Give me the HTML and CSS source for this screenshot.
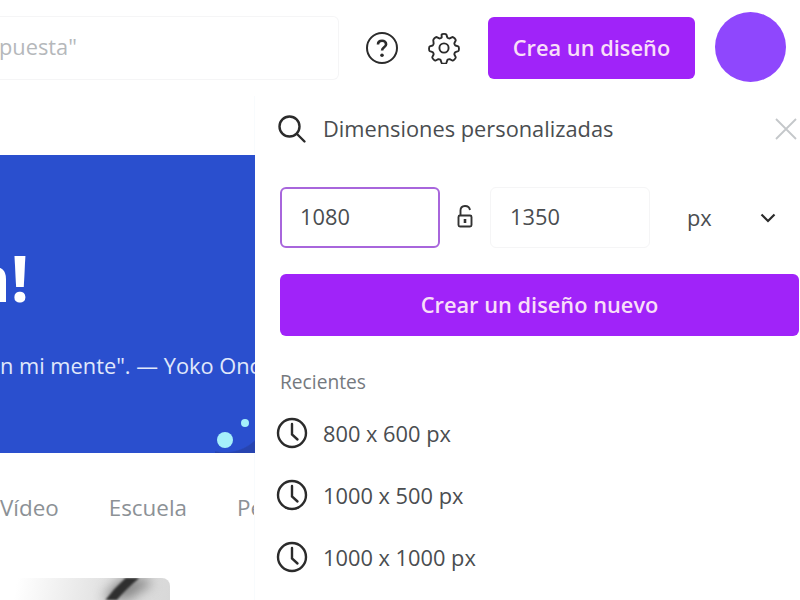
FILE: index.html
```html
<!DOCTYPE html>
<html lang="es">
<head>
    <meta charset="UTF-8">
    <title>Crea un diseño</title>
    <link rel="stylesheet" href="styles.css">
</head>
<body>
    <header class="topBar">
        <div class="searchBox">puesta"</div>
        <svg class="helpIcon" width="34" height="34" viewBox="0 0 34 34" fill="none" stroke="#2b2b2b" stroke-width="2">
            <circle cx="17" cy="17" r="15"/>
            <path d="M13 13.6c0-2.4 1.8-3.8 4.1-3.8s4 1.4 4 3.4c0 3.2-4 3-4 6.2" stroke-width="2.6"/>
            <circle cx="17" cy="24.2" r="1.8" fill="#2b2b2b" stroke="none"/>
        </svg>
        <svg class="gearIcon" width="32" height="32" viewBox="0 0 32 32" fill="none" stroke="#2b2b2b" stroke-width="1.9" stroke-linejoin="round">
            <circle cx="16" cy="16" r="4.6"/>
            <path d="M13.6 2.6c.4-1 4.4-1 4.8 0l.9 2.8c.2.5 1.9 1.2 2.4 1l2.6-1.3c1-.4 3.8 2.4 3.4 3.4l-1.3 2.6c-.2.5.5 2.2 1 2.4l2.8.9c1 .4 1 4.4 0 4.8l-2.8.9c-.5.2-1.2 1.9-1 2.4l1.3 2.6c.4 1-2.4 3.8-3.4 3.4l-2.6-1.3c-.5-.2-2.2.5-2.4 1l-.9 2.8c-.4 1-4.4 1-4.8 0l-.9-2.8c-.2-.5-1.9-1.2-2.4-1l-2.6 1.3c-1 .4-3.8-2.4-3.4-3.4l1.3-2.6c.2-.5-.5-2.2-1-2.4l-2.8-.9c-1-.4-1-4.4 0-4.8l2.8-.9c.5-.2 1.2-1.9 1-2.4L5.3 8.5c-.4-1 2.4-3.8 3.4-3.4l2.6 1.3c.5.2 2.2-.5 2.4-1z"/>
        </svg>
        <button class="createButton">Crea un diseño</button>
        <div class="avatar"></div>
    </header>

    <main class="content">
        <section class="leftColumn">
            <div class="banner">
                <div class="bannerTitle">n!</div>
                <div class="bannerQuote">n mi mente". — Yoko Ono</div>
                <span class="bannerCorner"></span>
                <span class="dot dotBig"></span>
                <span class="dot dotSmall"></span>
            </div>
            <nav class="tabs">
                <span>Vídeo</span>
                <span>Escuela</span>
                <span>Personal</span>
            </nav>
            <div class="thumb">
                <svg class="thumbGlow" width="170" height="22" viewBox="0 0 170 22">
                    <path d="M112 26C120 15 130 6 146 -3" fill="none" stroke="#8a8a8a" stroke-width="22"/>
                </svg>
                <svg class="thumbStreak" width="170" height="22" viewBox="0 0 170 22">
                    <path d="M108 26C116 15 125 6 136 -3" fill="none" stroke="#2f2f2f" stroke-width="9"/>
                </svg>
            </div>
        </section>

        <aside class="panel">
            <div class="panelSearch">
                <svg width="30" height="30" viewBox="0 0 30 30" fill="none" stroke="#2b2b2b" stroke-width="2.4">
                    <circle cx="12.5" cy="12.5" r="10"/>
                    <path d="M20 20l7.5 7.5" stroke-linecap="round"/>
                </svg>
                <span class="panelSearchText">Dimensiones personalizadas</span>
                <svg class="closeIcon" width="22" height="22" viewBox="0 0 22 22" stroke="#c4c7ca" stroke-width="1.8">
                    <path d="M1 1l20 20M21 1L1 21"/>
                </svg>
            </div>

            <div class="sizeRow">
                <div class="sizeInput sizeInputActive">1080</div>
                <svg class="lockIcon" width="18" height="24" viewBox="0 0 18 24" fill="none" stroke="#333" stroke-width="1.9">
                    <rect x="2.5" y="11.5" width="13" height="11" rx="1.5"/>
                    <path d="M4.5 11.5V6.5c0-6 8.5-6 9.5-.5"/>
                    <path d="M9 15v4" stroke-width="2.6"/>
                </svg>
                <div class="sizeInput">1350</div>
                <div class="unitSelect">
                    <span>px</span>
                    <svg width="16" height="10" viewBox="0 0 16 10" fill="none" stroke="#2b2b2b" stroke-width="2.2">
                        <path d="M1.5 1.5L8 8l6.5-6.5"/>
                    </svg>
                </div>
            </div>

            <button class="newDesignButton">Crear un diseño nuevo</button>

            <div class="recentTitle">Recientes</div>
            <ul class="recentList">
                <li>
                    <svg width="32" height="32" viewBox="0 0 32 32" fill="none" stroke="#2b2b2b" stroke-width="2.4">
                        <circle cx="16" cy="16" r="14"/>
                        <path d="M16 7v10.5l5.5 5" stroke-linecap="round"/>
                    </svg>
                    800 x 600 px
                </li>
                <li>
                    <svg width="32" height="32" viewBox="0 0 32 32" fill="none" stroke="#2b2b2b" stroke-width="2.4">
                        <circle cx="16" cy="16" r="14"/>
                        <path d="M16 7v10.5l5.5 5" stroke-linecap="round"/>
                    </svg>
                    1000 x 500 px
                </li>
                <li>
                    <svg width="32" height="32" viewBox="0 0 32 32" fill="none" stroke="#2b2b2b" stroke-width="2.4">
                        <circle cx="16" cy="16" r="14"/>
                        <path d="M16 7v10.5l5.5 5" stroke-linecap="round"/>
                    </svg>
                    1000 x 1000 px
                </li>
            </ul>
        </aside>
    </main>
</body>
</html>
```

FILE: styles.css
```css
html, body {
    height: 600px;
    overflow: hidden;
}
body {
    margin: 0;
    background-color: white;
    color: #4a4d50;
    font-family: "Open Sans", sans-serif;
    font-size: 21.8px;
}
button {
    border: none;
    color: #f8def8;
    font-family: inherit;
    font-size: 21.8px;
    font-weight: 600;
    background-color: #a023f9;
    border-radius: 6px;
}
.topBar {
    display: flex;
    align-items: center;
    height: 96px;
    box-sizing: border-box;
    padding-bottom: 1px;
}
.searchBox {
    width: 340px;
    height: 64px;
    box-sizing: border-box;
    margin-left: -1px;
    border: 1px solid #f5f5f6;
    border-left: none;
    border-radius: 0 6px 6px 0;
    color: #b5b8bb;
    line-height: 60px;
}
.helpIcon {
    margin-left: 26px;
}
.gearIcon {
    margin-left: 29px;
}
.createButton {
    width: 207px;
    height: 62px;
    margin-left: 28px;
    padding-bottom: 2px;
}
.avatar {
    width: 71px;
    height: 70px;
    margin: 0 0 1px 20px;
    border-radius: 50%;
    background-color: #8f47fd;
}
.content {
    display: flex;
}
.leftColumn {
    width: 255px;
    flex-shrink: 0;
    padding-top: 59px;
    overflow: hidden;
}
.banner {
    position: relative;
    height: 298px;
    overflow: hidden;
    background-color: #2a4fce;
    color: white;
}
.bannerTitle {
    display: flex;
    justify-content: flex-end;
    height: 100px;
    margin-right: 226px;
    padding-top: 79px;
    font-size: 64px;
    font-weight: 700;
    line-height: 87px;
}
.bannerQuote {
    margin-top: 17px;
    color: #e0e8fb;
    white-space: nowrap;
}
.bannerCorner {
    position: absolute;
    right: 0;
    bottom: 0;
    width: 40px;
    height: 14px;
    background: radial-gradient(circle 44px at 10px -30px, transparent 97%, #2744b0 100%);
}
.dot {
    position: absolute;
    border-radius: 50%;
    background-color: #a6f0fa;
}
.dotBig {
    left: 217px;
    top: 277px;
    width: 16px;
    height: 16px;
}
.dotSmall {
    left: 241px;
    top: 264px;
    width: 8px;
    height: 8px;
}
.tabs {
    display: flex;
    gap: 50px;
    height: 125px;
    padding-top: 41px;
    box-sizing: border-box;
    color: #8c9196;
    font-size: 22.4px;
    white-space: nowrap;
    line-height: 27px;
}
.thumb {
    position: relative;
    width: 170px;
    height: 22px;
    border-radius: 0 8px 0 0;
    overflow: hidden;
    background: linear-gradient(100deg, #fff 10%, #e2e2e2 60%, #d8d8d8 100%);
}
.thumbGlow, .thumbStreak {
    position: absolute;
    left: 0;
    top: 0;
}
.thumbGlow {
    filter: blur(6px);
}
.thumbStreak {
    filter: blur(1px);
}
.panel {
    flex: 1;
    padding: 0 1px 0 25px;
    border-left: 1px solid #f8fbfd;
    margin-left: -1px;
}
.panelSearch {
    display: flex;
    align-items: center;
    height: 66px;
    margin-left: -3px;
}
.panelSearchText {
    margin-left: 16px;
    padding-bottom: 2px;
}
.closeIcon {
    margin-left: auto;
    margin-right: 2px;
}
.sizeRow {
    display: flex;
    align-items: center;
    margin-top: 25px;
}
.sizeInput {
    box-sizing: border-box;
    width: 160px;
    height: 61px;
    padding-left: 19px;
    border: 1px solid #f5f5f6;
    border-radius: 6px;
    line-height: 57px;
}
.sizeInputActive {
    border: 2px solid #a866dc;
    padding-left: 18px;
    line-height: 55px;
}
.lockIcon {
    margin: 0 16px 3px;
}
.unitSelect {
    display: flex;
    align-items: center;
    flex: 1;
    margin-left: 37px;
}
.unitSelect svg {
    margin-left: 48px;
}
.newDesignButton {
    display: block;
    width: 100%;
    height: 62px;
    margin-top: 26px;
    padding-bottom: 2px;
}
.recentTitle {
    margin-top: 31px;
    color: #75797e;
    font-size: 19.2px;
    line-height: 29px;
}
.recentList {
    list-style: none;
    margin: 6px 0 0 -4px;
    padding: 0;
}
.recentList li {
    display: flex;
    align-items: center;
    gap: 15px;
    height: 62px;
}
```
